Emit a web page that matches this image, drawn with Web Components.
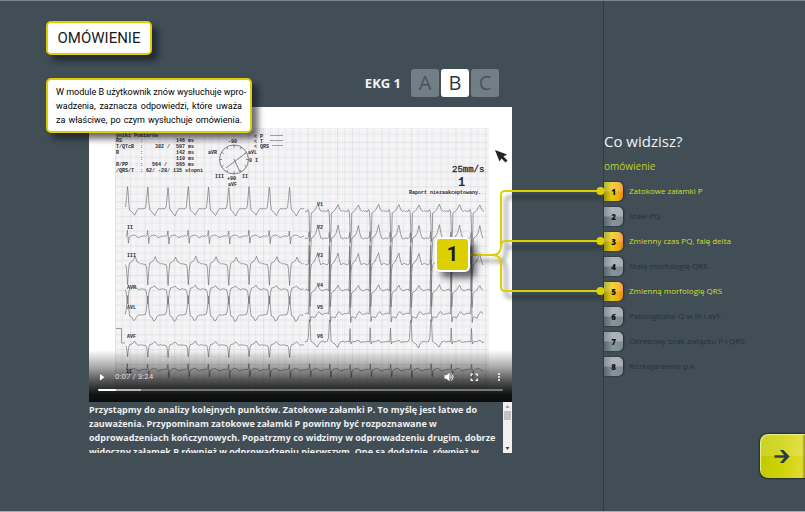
<!DOCTYPE html>
<html lang="pl">
<head>
<meta charset="utf-8">
<title>EKG 1 – omówienie</title>
<style>
  body { margin: 0; background: #414e55; font-family: "Open Sans", "Noto Sans", sans-serif; }
</style>
</head>
<body>
<lesson-page>
  <case-tabs slot="main" label="EKG 1" options="A,B,C" current="B"></case-tabs>
  <video-player slot="main" time="0:07 / 3:24"></video-player>
  <transcript-box slot="main">Przystąpmy do analizy kolejnych punktów. Zatokowe załamki P. To myślę jest łatwe do<br>zauważenia. Przypominam zatokowe załamki P powinny być rozpoznawane w<br>odprowadzeniach kończynowych. Popatrzmy co widzimy w odprowadzeniu drugim, dobrze<br>widoczny załamek P również w odprowadzeniu pierwszym. One są dodatnie, również w</transcript-box>
  <answer-panel slot="side" heading="Co widzisz?" sub="omówienie">
    <answer-item n="1" active>Zatokowe załamki P</answer-item>
    <answer-item n="2">Stałe PQ</answer-item>
    <answer-item n="3" active>Zmienny czas PQ, falę delta</answer-item>
    <answer-item n="4">Stałą morfologię QRS</answer-item>
    <answer-item n="5" active>Zmienną morfologię QRS</answer-item>
    <answer-item n="6">Patologiczne Q w III i aVF</answer-item>
    <answer-item n="7">Okresowy brak związku P i QRS</answer-item>
    <answer-item n="8">Rozkojarzenie p-k</answer-item>
  </answer-panel>
  <next-button slot="over"></next-button>
  <link-lines slot="over"></link-lines>
  <note-card slot="over" kind="title">OMÓWIENIE</note-card>
  <note-card slot="over" kind="note"><div>W module B użytkownik znów wysłuchuje wpro-</div><div>wadzenia, zaznacza odpowiedzi, które uważa</div><div>za właściwe, po czym wysłuchuje omówienia.</div></note-card>
  <note-card slot="over" kind="marker">1</note-card>
</lesson-page>

<script>
const define = (name, html, setup) => customElements.define(name, class extends HTMLElement {
  connectedCallback() {
    if (this.shadowRoot) return;
    const root = this.attachShadow({ mode: 'open' });
    root.innerHTML = typeof html === 'function' ? html(this) : html;
    if (setup) setup(this, root);
  }
});

define('lesson-page', `
<style>
  :host { display: grid; grid-template-columns: minmax(0, 1fr) 202px; min-height: 100vh; box-sizing: border-box;
    position: relative; overflow: hidden; border-top: 1px solid #7d878b; border-bottom: 1px solid #a5adb0;
    background: #414e55; }
  main { padding: 68px 91px 0 89px; min-width: 0; }
  aside { border-left: 1px solid #303b41; padding-top: 128px; }
</style>
<main><slot name="main"></slot></main>
<aside><slot name="side"></slot></aside>
<slot name="over"></slot>`);

define('case-tabs', el => `
<style>
  :host { display: flex; align-items: center; justify-content: flex-end; gap: 10px; padding-right: 13px; height: 28px; margin-bottom: 10px; }
  b { color: #f1f3f4; font-size: 13px; font-weight: 700; }
  nav { display: flex; gap: 2px; }
  button { width: 28px; height: 28px; padding: 0; border: 0; border-radius: 3px; background: #717e86; color: #47545c;
    font: 400 20px/28px "Open Sans", sans-serif; }
  button[aria-pressed=true] { background: #fff; color: #303a40; }
</style>
<b>${el.getAttribute('label')}</b>
<nav>${el.getAttribute('options').split(',').map(o =>
  `<button aria-pressed="${o === el.getAttribute('current')}">${o}</button>`).join('')}</nav>`);

/* Electrocardiogram trace: each lead repeats one beat, given as [dx, dy] offsets around its R wave. */
const STEP = 20.25, FIRST = 127.6;
const wave = (y, from, to, beat) => {
  const pts = [];
  for (let i = from; i < to; i++) {
    const shape = typeof beat === 'function' ? beat(i) : beat;
    const x0 = FIRST + i * STEP, w = (i % 3) * 0.4 - 0.3;
    for (const [dx, dy] of shape) {
      const x = x0 + dx;
      if (x > 484 || x < 125) continue;
      pts.push(x.toFixed(1) + ' ' + (y + dy + (Math.abs(dy) > 3 ? w : 0)).toFixed(1));
    }
  }
  return `<path d="M${pts.join('L')}"/>`;
};
const leads = () => {
  const up = [[-5,0],[-3,-.6],[-2,-2],[-1,-12],[-.1,-22],[.5,-17],[1.2,-5],[1.9,1],[3.5,2.2],[5,4],[7,6.5],[8.6,3],[10,.5],[11.5,-.6],[13,0],[14.3,-.6]];
  const two = [[-5,0],[-3.5,-1],[-2,0],[-1,-1],[-.2,-6],[.8,7],[1.6,1],[3,-.5],[6,-1.5],[8,-1],[9,0],[11,1],[13,0],[14.5,-.5]];
  const down = [[-5,0],[-2,.6],[-1.2,4],[0,21],[.9,6],[1.8,-1],[4,-2],[6,-4],[7.5,-7.5],[9.5,-2],[11,-1.5],[13,0],[14,-.5]];
  const avr = [[-5,0],[-2.5,.6],[-1.4,3],[0,15],[1.2,3],[2.4,-1],[4.5,-1.5],[7,-3.5],[8.5,-1],[10.5,0],[12,.8],[14,-.3]];
  const avl = [[-6,0],[-2.5,-.6],[-1.4,-5],[0,-19],[1.1,-7],[2,1],[4,2],[6,6],[7.5,5],[9,1.5],[11,0],[14,0]];
  const avf = [[-5,0],[-2,.6],[-1.1,2.5],[0,12],[1,2.5],[2,-.5],[4.5,-1],[7,-3.6],[9,-.8],[11,.4],[13,-.4],[14.5,.3]];
  const v1 = [[-5,0],[-3,.5],[-2,-1.5],[-1,1],[-.5,12],[0,31],[.9,20],[1.3,2],[3,1],[5,-1],[8,-6.5],[10,-1],[12,.5],[13,-.5],[14.5,.5]];
  const v2 = [[-5,0],[-3,.6],[-1.4,-1],[-.7,-6],[-.2,33],[.8,12],[1.5,0],[3.5,-1],[6,-5],[8,-13],[9.5,-5],[11,0],[13,1],[14.5,0]];
  const v3 = [[-5,0],[-3,1],[-1.4,-1],[-.7,-18],[-.2,27],[.7,6],[1.6,0],[4,-2],[6,-6],[8,-11],[9.5,-3],[11,1],[13,-1],[14.5,0]];
  const v4 = [[-5,0],[-3,-1],[-1.4,1],[-.5,-30],[.2,17],[1.2,3],[3,1.6],[5,0],[8,-5],[9.5,-1],[11,0],[13,1],[14.5,-.5]];
  const v5 = [[-5,0],[-3,-1],[-1.3,0],[-.5,-24],[.3,8],[1.1,3],[3,3],[5,4],[7,0],[9,-2.5],[11,0],[13,.6],[14.5,-.6]];
  const v6 = i => [9,10,14,15].includes(i)
    ? [[-5,0],[-3,-.5],[-1.6,-4],[-.6,-22],[.2,-18],[1,-1],[3,1],[5,2],[7.5,5.5],[9,2],[10.5,0],[13,-1],[14.5,0]]
    : [[-5,0],[-3,-.8],[-1,0],[-.4,-14],[.4,2],[1.3,0],[5,-.5],[8,-2],[10,.5],[12,0],[14.5,-.3]];
  return wave(209,0,9,up) + wave(236.5,0,9,two) + wave(264,0,9,down) + wave(289,0,9,avr) + wave(315,0,9,avl)
    + wave(345,0,9,avf) + wave(370,0,18,two) + wave(211,9,18,v1) + wave(238,9,18,v2) + wave(264,9,18,v3)
    + wave(290,9,18,v4) + wave(314,9,18,v5) + wave(342,9,18,v6);
};

define('ecg-sheet', () => {
  const t = (x, y, s, size = 5, extra = '') => `<text x="${x}" y="${y}" font-size="${size}" ${extra}>${s}</text>`;
  let ticks = '';
  for (let a = 0; a < 360; a += 30) {
    const r = a * Math.PI / 180, c = Math.cos(r), s = Math.sin(r);
    ticks += `M${234 + 12 * c} ${159.5 + 12 * s}L${234 + 14.5 * c} ${159.5 + 14.5 * s}`;
  }
  return `
<style>
  :host { display: block; background: #fff; }
  svg { display: block; width: 100%; height: auto; }
  text { font-family: "Liberation Mono", monospace; fill: #2b2b2e; white-space: pre; font-weight: 700; }
</style>
<svg viewBox="89 107 423 295" role="img" aria-label="Zapis EKG">
  <defs>
    <pattern id="g" width="14.8" height="14.8" patternUnits="userSpaceOnUse" x="115" y="127">
      <path d="M1.8 0V15M5.5 0V15M9.2 0V15M12.9 0V15M0 1.8H15M0 5.5H15M0 9.2H15M0 12.9H15" stroke="#f0eff1" stroke-width=".7"/>
      <path d="M0 7.4H15M7.4 0V15" stroke="#e5e4e6" stroke-width=".8"/>
      <path d="M0 .4H15M.4 0V15" stroke="#dddcdf" stroke-width=".8"/>
    </pattern>
  </defs>
  <rect x="115" y="128" width="374" height="274" fill="#f7f6f8"/>
  <rect x="115" y="128" width="374" height="274" fill="url(#g)"/>
  ${t(116,137,'yniki Pomiarów')}
  ${t(116,142,'RS      :           146 ms')}
  ${t(116,148,'T/QTcB  :    382 /  507 ms')}
  ${t(116,154,'R       :           142 ms')}
  ${t(116,160,'        :           110 ms')}
  ${t(116,166,'R/PP    :   564 /   565 ms')}
  ${t(116,172,'/QRS/T  : 62/ -28/ 135 stopni')}
  <g fill="none" stroke="#66666b" stroke-width=".8"><circle cx="234" cy="159.500" r="14.500"/><path d="${ticks}M226 168L246 153M234 159L240 172"/></g>
  ${t(228,143,'-90')}${t(208,154,'aVR')}${t(248,154,'aVL')}${t(249,162,'0 I')}${t(215,178,'III')}${t(227,180,'+90')}${t(242,178,'II')}${t(228,186,'aVF')}
  ${t(254,138,'&lt; P')}${t(254,143,'&lt; T')}${t(254,148,'&lt; QRS')}
  <path d="M270 135.500H283M270 140.500H283M272 145.500H283" stroke="#88888c" stroke-width=".8"/>
  ${t(452,172,'25mm/s',9,'style="font-weight:400" stroke="#2b2b2e" stroke-width=".3"')}
  ${t(458,186,'1',12)}
  ${t(409,194,'Raport niezaakceptowany.')}
  ${t(127,229,'II')}${t(127,257,'III')}${t(127,289,'AVR')}${t(127,309,'AVL')}${t(127,338,'AVF')}${t(126,373,'II')}
  ${[206,229,257,287,309,338].map((y, i) => t(317, y, 'V' + (i + 1))).join('')}
  <g fill="none" stroke="#6c6c71" stroke-width=".65" stroke-linejoin="round">
    <path d="M116 328.500H121.500V343H125"/>
    ${leads()}
  </g>
  <path d="M495 150L507 154.500L503.500 156.500L507.500 160.500L505.500 162.500L501.500 158.500L499.500 161.500Z" fill="#222426"/>
</svg>`;
});

define('video-player', el => `
<style>
  :host { display: block; position: relative; overflow: hidden; }
  .controls { position: absolute; inset: auto 0 0 0; padding: 19px 9px 11px; display: flex; flex-direction: column; gap: 4px;
    background: linear-gradient(to bottom, rgba(0,0,0,0), rgba(0,0,0,.34) 33%, rgba(0,0,0,.68) 60%, rgba(8,10,10,.96) 85%, #0b0d0d); }
  .row { display: flex; align-items: center; justify-content: space-between; height: 16px; }
  .start { display: flex; align-items: center; gap: 5px; }
  .start span { font: 400 8px/8px Roboto, sans-serif; color: #dcdcdc; }
  .end { display: flex; gap: 13px; margin-right: -2px; }
  button { padding: 0; border: 0; background: none; width: 12px; height: 12px; display: block; }
  svg { display: block; width: 12px; height: 12px; fill: #fff; }
  input { appearance: none; display: block; margin: 0; width: 100%; height: 2px; border-radius: 1px;
    background: linear-gradient(to right, #fff 18px, #b9b9b9 18px 43px, #777 43px); }
  input::-webkit-slider-thumb { appearance: none; width: 2px; height: 2px; background: #fff; }
</style>
<ecg-sheet></ecg-sheet>
<div class="controls">
  <div class="row">
    <div class="start">
      <button aria-label="Odtwórz"><svg viewBox="0 0 12 12"><path d="M2 3V9.500L6.500 6.200Z"/></svg></button>
      <span>${el.getAttribute('time')}</span>
    </div>
    <div class="end">
      <button aria-label="Głośność"><svg viewBox="0 0 12 12"><path d="M1.500 4.200H3.500L6.500 1.800V10.200L3.500 7.800H1.500Z"/><path d="M7.500 4.300Q9 6 7.500 7.700M8 2.300Q12 6 8 9.700" fill="none" stroke="#fff"/></svg></button>
      <button aria-label="Pełny ekran"><svg viewBox="0 0 12 12"><path d="M3.200 5V3.200H5M7.500 3.200H9.300V5M9.300 7.500V9.300H7.500M5 9.300H3.200V7.500" fill="none" stroke="#fff" stroke-width="1.200"/></svg></button>
      <button aria-label="Więcej"><svg viewBox="0 0 12 12"><circle cx="6" cy="3" r="1"/><circle cx="6" cy="6" r="1"/><circle cx="6" cy="9" r="1"/></svg></button>
    </div>
  </div>
  <input type="range" aria-label="Postęp" min="0" max="204" value="7">
</div>`);

define('transcript-box', `
<style>
  :host { display: flex; height: 51px; }
  .text { flex: 1; min-width: 0; overflow: hidden; white-space: nowrap; color: #eef0f1;
    font: 700 9px/14px "Open Sans", "Noto Sans", sans-serif; padding-top: 1px; box-sizing: border-box; }
  .bar { width: 9px; background: #f0f0f0; display: flex; flex-direction: column; align-items: center; }
  i { flex: 1; align-self: stretch; }
  i::before { content: ""; display: block; height: 9px; margin: 0 1px; background: #c2c2c2; }
  svg { display: block; width: 9px; height: 9px; fill: #9a9a9a; }
  svg:last-child { fill: #444; }
</style>
<div class="text"><slot></slot></div>
<div class="bar" aria-hidden="true">
  <svg viewBox="0 0 9 9"><path d="M4.500 3L6.500 6H2.500Z"/></svg><i></i>
  <svg viewBox="0 0 9 9"><path d="M4.500 6L6.500 3H2.500Z"/></svg>
</div>`);

define('answer-panel', el => `
<style>
  :host { display: block; }
  h2 { margin: 0; font-size: 15px; line-height: 24px; font-weight: 400; color: #f0f3f4; }
  h3 { margin: 0 0 2px; font-size: 10px; line-height: 26px; font-weight: 400; color: #bfd02f; }
  ul { display: block; margin: 0; padding: 0; }
</style>
<h2>${el.getAttribute('heading')}</h2>
<h3>${el.getAttribute('sub')}</h3>
<ul role="list"><slot></slot></ul>`);

define('answer-item', el => `
<style>
  :host { display: block; height: 25px; }
  button { display: flex; align-items: center; gap: 6px; width: 100%; padding: 0; border: 0; background: none; text-align: left;
    font: 400 8px/20px "Open Sans", "Noto Sans", sans-serif; color: #26313a; }
  b { width: 19px; height: 19px; box-sizing: border-box; border-radius: 0 5px 5px 0; text-align: center; line-height: 19px;
    color: #0f1418; font-weight: 800; font-size: 8px; box-shadow: 1px 0 2px #232d33, 0 0 1px #232d33;
    background: linear-gradient(to bottom, rgba(255,255,255,.26) 48%, rgba(0,0,0,.04) 52%), linear-gradient(to right, #5d6a72, #8d9aa2 45%, #85929a); }
  :host([active]) button { color: #d0de2c; }
  :host([active]) b { background: linear-gradient(to bottom, rgba(255,255,255,.18) 48%, rgba(0,0,0,.02) 52%), linear-gradient(to right, #a39a16, #e8cd10 40%, #f9ae10 75%, #f08a12); }
</style>
<button><b>${el.getAttribute('n')}</b><span><slot></slot></span></button>`);

define('next-button', `
<style>
  :host { display: block; position: absolute; right: 0; top: 432px; }
  button { width: 46px; height: 46px; box-sizing: border-box; padding: 0 0 0 14px; border: 1px solid #26323c; border-right: 0; border-radius: 9px 0 0 9px;
    box-shadow: inset 1px 1px 1px #eef08a, 0 0 2px #2b3640;
    background: linear-gradient(to right, transparent 42px, rgba(80,84,10,.75) 46px),
      linear-gradient(to bottom, rgba(255,255,255,.16) 50%, transparent 50%),
      linear-gradient(100deg, #bcc900, #cfd203 50%, #e6dc38); display: block; }
  svg { display: block; width: 17px; height: 17px; }
</style>
<button aria-label="Dalej"><svg viewBox="0 0 18 18"><path d="M.5 7.600H10.800L6.300 2.200H10L16.500 9L10 15.800H6.300L10.800 10.400H.5Z" fill="#2c3b49"/></svg></button>`);

define('link-lines', `
<style>
  :host { display: block; position: absolute; left: 460px; top: 179px; pointer-events: none; }
  svg { display: block; width: 150px; height: 130px; overflow: visible; }
  .s { filter: blur(2px); opacity: .36; }
</style>
<svg viewBox="460 180 150 130" aria-hidden="true">
  <g class="s" transform="translate(5 6)" fill="none" stroke="#000" stroke-width="3">
    <path d="M470 255H492Q501 255 501 246V195Q501 191 505 191H598M501 246Q501 241 505 241H598M492 255Q501 255 501 263V287Q501 291 505 291H598"/></g>
  <path d="M470 255H492Q501 255 501 246V195Q501 191 505 191H600M501 247Q501 241 505 241H600M492 255Q501 255 501 263V287Q501 291 505 291H600" fill="none" stroke="#ddd000" stroke-width="2"/>
  <g fill="#ddd000"><circle cx="600.500" cy="191" r="4"/><circle cx="600.500" cy="241" r="4"/><circle cx="600.500" cy="291" r="4"/></g>
</svg>`);

define('note-card', `
<style>
  :host { display: block; position: absolute; box-sizing: border-box; background: #fff; color: #1a1a1a; border-radius: 5px;
    border: 2px solid #ddd000; box-shadow: 6px 6px 6px rgba(20,20,30,.62); font-family: Roboto, sans-serif; }
  :host([kind=title]) { left: 46px; top: 20px; width: 106px; text-align: center; font-size: 15px; line-height: 30px; }
  :host([kind=note]) { left: 46px; top: 77px; width: 206px; padding: 5px 8px 4px; font-size: 9px; line-height: 14px; text-align: justify; text-align-last: justify; white-space: nowrap; color: #000; }
  :host([kind=marker]) { left: 435px; top: 236px; width: 35px; height: 35px; border-color: #fff; background: #ddd000;
    font-size: 20px; line-height: 31px; font-weight: 700; text-align: center; }
</style>
<slot></slot>`);
</script>
</body>
</html>
